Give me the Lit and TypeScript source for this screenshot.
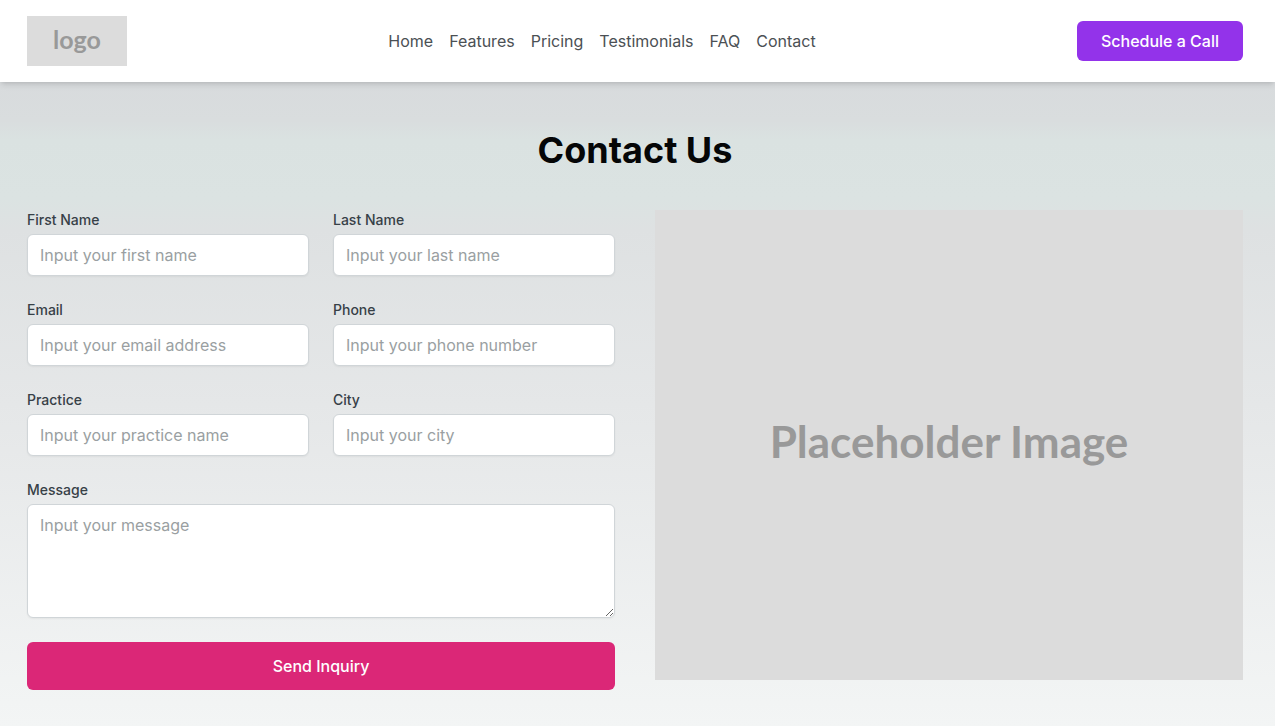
import { LitElement, html, css } from "lit";
import { customElement } from "lit/decorators.js";

const links = ["Home", "Features", "Pricing", "Testimonials", "FAQ", "Contact"];

const fields = [
  { id: "first-name", label: "First Name", type: "text", placeholder: "Input your first name" },
  { id: "last-name", label: "Last Name", type: "text", placeholder: "Input your last name" },
  { id: "email", label: "Email", type: "email", placeholder: "Input your email address" },
  { id: "phone", label: "Phone", type: "tel", placeholder: "Input your phone number" },
  { id: "practice", label: "Practice", type: "text", placeholder: "Input your practice name" },
  { id: "city", label: "City", type: "text", placeholder: "Input your city" },
];

@customElement("site-header")
export class SiteHeader extends LitElement {
  static styles = css`
    :host {
      display: block;
      position: relative;
      z-index: 1;
      background: #fff;
      box-shadow: 0 4px 6px -1px rgba(0, 0, 0, 0.1), 0 2px 4px -2px rgba(0, 0, 0, 0.1);
    }
    .bar {
      display: flex;
      align-items: center;
      justify-content: space-between;
      padding: 16px 32px 16px 27px;
    }
    .logo {
      display: flex;
      justify-content: center;
      width: 100px;
      height: 50px;
      background: #dcdcdc;
      color: #999;
      font: 700 25px/46px Lato, sans-serif;
      text-decoration: none;
    }
    .links {
      display: flex;
      gap: 16px;
    }
    .link {
      color: #4b5054;
      text-decoration: none;
    }
    .call {
      padding: 8px 24px;
      border: 0;
      border-radius: 6px;
      background: #9333ea;
      color: #fff;
      font: 500 16px/24px Inter, sans-serif;
    }
  `;

  render() {
    return html`
      <header class="bar">
        <a class="logo" href="#">logo</a>
        <nav class="links">
          ${links.map((l) => html`<a class="link" href="#${l.toLowerCase()}">${l}</a>`)}
        </nav>
        <button class="call" type="button">Schedule a Call</button>
      </header>
    `;
  }
}

@customElement("contact-form")
export class ContactForm extends LitElement {
  static styles = css`
    :host {
      display: block;
    }
    .form {
      display: grid;
      grid-template-columns: 1fr 1fr;
      gap: 24px;
    }
    .field {
      display: flex;
      flex-direction: column;
      gap: 4px;
      min-width: 0;
    }
    .wide {
      grid-column: 1 / -1;
    }
    .label {
      color: #374047;
      font-size: 14px;
      font-weight: 500;
      line-height: 20px;
    }
    .control {
      box-sizing: border-box;
      width: 100%;
      margin: 0;
      padding: 8px 12px;
      border: 1px solid #d0d5d8;
      border-radius: 6px;
      background: #fff;
      color: #111827;
      font: 400 16px/24px Inter, sans-serif;
      box-shadow: 0 1px 2px rgba(0, 0, 0, 0.05);
    }
    .control::placeholder {
      color: #9a9fa2;
      opacity: 1;
    }
    .message {
      display: block;
      resize: vertical;
    }
    .send {
      grid-column: 1 / -1;
      padding: 12px 24px;
      border: 0;
      border-radius: 6px;
      background: #db2777;
      color: #fff;
      font: 500 16px/24px Inter, sans-serif;
    }
  `;

  render() {
    return html`
      <form class="form">
        ${fields.map(
          (f) => html`
            <div class="field">
              <label class="label" for=${f.id}>${f.label}</label>
              <input class="control" id=${f.id} name=${f.id} type=${f.type} placeholder=${f.placeholder} />
            </div>
          `
        )}
        <div class="field wide">
          <label class="label" for="message">Message</label>
          <textarea class="control message" id="message" name="message" rows="4" placeholder="Input your message"></textarea>
        </div>
        <button class="send" type="submit">Send Inquiry</button>
      </form>
    `;
  }
}

@customElement("app-root")
export class AppRoot extends LitElement {
  static styles = css`
    :host {
      display: flex;
      flex-direction: column;
      min-height: 100vh;
      font: 400 16px/24px Inter, sans-serif;
    }
    .contact {
      flex: 1;
      padding: 48px 32px 36px 27px;
      background: linear-gradient(
        #d8dbdd,
        #d9ddde 6%,
        #dae2e1 9%,
        #dbe3e2 18%,
        #dee1e2 23%,
        #e5e7e8 50%,
        #f3f5f5
      );
    }
    .title {
      margin: 0 0 40px;
      color: #050607;
      font-size: 36px;
      font-weight: 700;
      line-height: 40px;
      text-align: center;
    }
    .columns {
      display: grid;
      grid-template-columns: 1fr 1fr;
      gap: 40px;
      align-items: start;
    }
    .picture {
      display: flex;
      align-items: center;
      justify-content: center;
      box-sizing: border-box;
      aspect-ratio: 5 / 4;
      padding-bottom: 8px;
      background: #dcdcdc;
      color: #999;
      font: 700 44px/54px Lato, sans-serif;
    }
  `;

  render() {
    return html`
      <site-header></site-header>
      <main class="contact">
        <h1 class="title">Contact Us</h1>
        <div class="columns">
          <contact-form></contact-form>
          <div class="picture">Placeholder Image</div>
        </div>
      </main>
    `;
  }
}
